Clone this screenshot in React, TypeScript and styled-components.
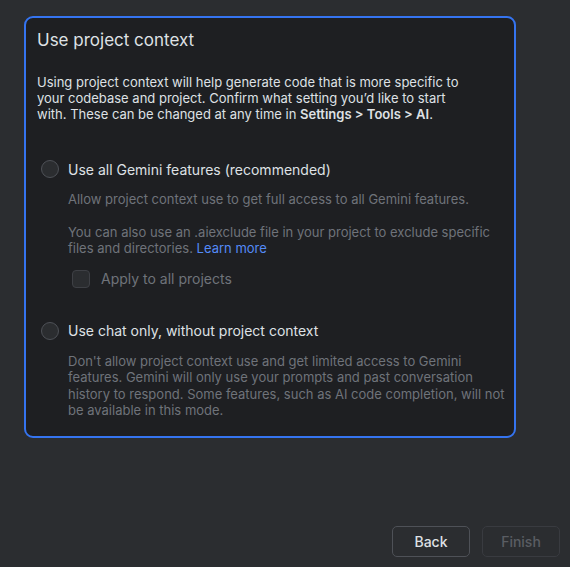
import styled, { createGlobalStyle } from "styled-components";

const Global = createGlobalStyle`
  html, body {
    margin: 0;
    padding: 0;
    background: #2b2d30;
  }
  body {
    font-family: Inter, "Noto Sans", sans-serif;
    color: #dfe1e5;
    -webkit-font-smoothing: antialiased;
  }
`;

const Page = styled.div`
  width: 570px;
  height: 567px;
  box-sizing: border-box;
  padding: 16px 10px 10px 24px;
  display: flex;
  flex-direction: column;
`;

const Card = styled.div`
  width: 492px;
  box-sizing: border-box;
  background: #1e1f22;
  border: 2px solid #3574f0;
  border-radius: 9px;
  padding: 11px 8px 17px 11px;
`;

const Title = styled.h1`
  margin: 0;
  font-size: 17px;
  font-weight: 400;
  line-height: 22px;
  color: #dfe1e5;
`;

const Intro = styled.p`
  margin: 23px 0 0;
  max-width: 428px;
  font-size: 13px;
  line-height: 16px;
  color: #dfe1e5;
  b {
    display: inline-block;
    line-height: 16px;
    font-weight: 600;
  }
`;

const Option = styled.div<{ $top: number }>`
  margin-top: ${(p) => p.$top}px;
`;

const OptionRow = styled.label`
  display: flex;
  align-items: center;
  gap: 9px;
  margin-left: 4px;
  height: 18px;
  font-size: 14px;
  color: #dfe1e5;
`;

const Radio = styled.span`
  width: 18px;
  height: 18px;
  box-sizing: border-box;
  border-radius: 50%;
  border: 1px solid #4e5157;
  background: #2b2d30;
  flex-shrink: 0;
`;

const Desc = styled.p<{ $top?: number }>`
  margin: ${(p) => p.$top ?? 13}px 0 0 31px;
  font-size: 13px;
  line-height: 16.5px;
  color: #6f737a;
  a {
    display: inline-block;
    line-height: 16.5px;
    color: #548af7;
    text-decoration: none;
  }
`;

const CheckRow = styled.label`
  display: flex;
  align-items: center;
  gap: 11px;
  height: 18px;
  margin: 13px 0 0 35px;
  font-size: 14px;
  color: #6f737a;
`;

const Box = styled.span`
  width: 18px;
  height: 18px;
  box-sizing: border-box;
  border-radius: 4px;
  border: 1px solid #3e4045;
  background: #2b2d30;
`;

const Footer = styled.div`
  margin-top: auto;
  display: flex;
  justify-content: flex-end;
  gap: 12px;
`;

const Button = styled.button<{ $disabled?: boolean }>`
  width: 78px;
  height: 31px;
  box-sizing: border-box;
  border-radius: 5px;
  border: 1px solid ${(p) => (p.$disabled ? "#393b40" : "#4e5157")};
  background: #2b2d30;
  color: ${(p) => (p.$disabled ? "#5a5d63" : "#dfe1e5")};
  font-family: inherit;
  font-size: 14px;
  font-weight: 500;
`;

export default function App() {
  return (
    <>
      <Global />
      <Page>
        <Card>
          <Title>Use project context</Title>
          <Intro>
            Using project context will help generate code that is more specific to your
            codebase and project. Confirm what setting you’d like to start with. These can
            be changed at any time in <b>Settings &gt; Tools &gt; AI</b>.
          </Intro>
          <Option $top={38}>
            <OptionRow>
              <Radio />
              Use all Gemini features (recommended)
            </OptionRow>
            <Desc>Allow project context use to get full access to all Gemini features.</Desc>
            <Desc $top={16}>
              You can also use an .aiexclude file in your project to exclude specific files
              and directories. <a href="#">Learn more</a>
            </Desc>
            <CheckRow>
              <Box />
              Apply to all projects
            </CheckRow>
          </Option>
          <Option $top={34}>
            <OptionRow>
              <Radio />
              Use chat only, without project context
            </OptionRow>
            <Desc>
              Don't allow project context use and get limited access to Gemini features.
              Gemini will only use your prompts and past conversation history to respond.
              Some features, such as AI code completion, will not be available in this mode.
            </Desc>
          </Option>
        </Card>
        <Footer>
          <Button>Back</Button>
          <Button $disabled>Finish</Button>
        </Footer>
      </Page>
    </>
  );
}
